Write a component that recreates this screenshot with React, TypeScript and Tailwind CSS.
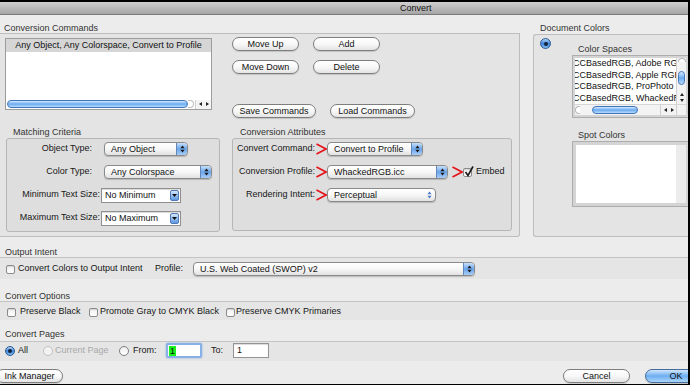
import React from 'react';

const Tri = ({ dir }: { dir: 'l' | 'r' | 'u' | 'd' }) => {
  const wide = dir === 'u' || dir === 'd';
  const d = { l: 'M3 0L3 4L0 2Z', r: 'M0 0L0 4L3 2Z', u: 'M0 3L4 3L2 0Z', d: 'M0 0L4 0L2 3Z' }[dir];
  return (
    <svg width={wide ? 4 : 3} height={wide ? 3 : 4} viewBox={wide ? '0 0 4 3' : '0 0 3 4'}>
      <path d={d} fill="#222" />
    </svg>
  );
};

const Pill = ({ children, className = '' }: { children: React.ReactNode; className?: string }) => (
  <div
    className={`flex h-[14px] shrink-0 items-center justify-center rounded-full border border-[#7e7e7e] bg-linear-to-b from-white via-[#f8f8f8] to-[#e4e4e4] leading-none text-[#111] shadow-[0_1px_1px_rgba(0,0,0,0.15)] ${className}`}
  >
    {children}
  </div>
);

const Popup = ({ value, className = '', light = false }: { value: string; className?: string; light?: boolean }) => (
  <div
    className={`flex h-[14px] shrink-0 items-center overflow-hidden rounded-[4px] border border-[#8a8a8a] bg-linear-to-b from-white via-[#f7f7f7] to-[#e2e2e2] pl-[6px] leading-none text-[#111] shadow-[0_1px_1px_rgba(0,0,0,0.18)] ${className}`}
  >
    <span className="flex-1 truncate">{value}</span>
    <div
      className={`flex h-full w-[11px] items-center justify-center ${
        light ? '' : 'rounded-r-[3px] border-l border-[#6286ba] bg-linear-to-b from-[#c8e0f9] via-[#6aa4ea] to-[#a8cdf5]'
      }`}
    >
      <svg width="5" height="8" viewBox="0 0 5 8">
        <path d="M2.5 0.5L4.6 3.2H0.4Z M0.4 4.8H4.6L2.5 7.5Z" fill={light ? '#4d7cc4' : '#1a1a1a'} />
      </svg>
    </div>
  </div>
);

const Combo = ({ value, className = '' }: { value: string; className?: string }) => (
  <div
    className={`flex h-[15px] w-[80px] shrink-0 items-center border border-[#8f8f8f] bg-white pl-[3px] pr-[1px] leading-none text-[#111] shadow-[inset_0_1px_1px_rgba(0,0,0,0.15)] ${className}`}
  >
    <span className="flex-1">{value}</span>
    <div className="flex h-[11px] w-[9px] items-center justify-center rounded-[2px] border border-[#4f78b5] bg-linear-to-b from-[#d3e6fb] to-[#5b97e0]">
      <svg width="5" height="3" viewBox="0 0 5 3">
        <path d="M0 0H5L2.5 3Z" fill="#111" />
      </svg>
    </div>
  </div>
);

const Box = ({ checked = false }: { checked?: boolean }) => (
  <div className="relative h-[9px] w-[9px] shrink-0 rounded-[2px] border border-[#8b8b8b] bg-linear-to-b from-[#efefef] to-white shadow-[inset_0_1px_1px_rgba(0,0,0,0.12)]">
    {checked && (
      <svg className="absolute -top-[3px] left-0" width="10" height="11" viewBox="0 0 10 11">
        <path d="M1.5 6L4 9.5L9 0.5" fill="none" stroke="#1b1b1b" strokeWidth="1.6" />
      </svg>
    )}
  </div>
);

const Radio = ({ on = false, dim = false, big = false }: { on?: boolean; dim?: boolean; big?: boolean }) => (
  <div
    className={`flex shrink-0 items-center justify-center rounded-full border ${big ? 'h-[11px] w-[11px]' : 'h-[10px] w-[10px]'} ${
      on
        ? 'border-[#2c5a94] bg-linear-to-b from-[#b3d4f5] via-[#3f86d9] to-[#7fbaf0]'
        : dim
        ? 'border-[#c2c2c2] bg-[#f2f2f2]'
        : 'border-[#7d7d7d] bg-linear-to-b from-[#eeeeee] to-white'
    }`}
  >
    {on && <div className="h-[4px] w-[4px] rounded-full bg-[#13233a]" />}
  </div>
);

const RedArrow = ({ className = '' }: { className?: string }) => (
  <svg className={`shrink-0 ${className}`} width="11" height="12" viewBox="0 0 11 12">
    <path d="M0.5 1L10 6L0.5 11" fill="none" stroke="#e4141a" strokeWidth="1.6" />
  </svg>
);

const Thumb = ({ className = '' }: { className?: string }) => (
  <div
    className={`rounded-full border border-[#3f76bb] bg-linear-to-b from-[#d6eafd] via-[#6aaaf0] to-[#b9dbfb] ${className}`}
  />
);

const CommandList = () => (
  <div className="mt-[4px] flex h-[72px] w-[207px] flex-col border border-[#9c9c9c] bg-white">
    <div className="h-[13px] bg-[#d6d6d6] text-center leading-[13px] text-[#111]">
      Any Object, Any Colorspace, Convert to Profile
    </div>
    <div className="flex-1" />
    <div className="flex h-[10px] items-center pl-[1px]">
      <Thumb className="h-[8px] w-[181px]" />
      <div className="h-[8px] w-[6px] rounded-r-full border border-l-0 border-[#bdbdbd] bg-white" />
      <div className="ml-auto flex h-[9px] w-[16px] items-center justify-center gap-[4px] border-l border-[#cfcfcf] bg-[#f4f4f4]">
        <Tri dir="l" />
        <Tri dir="r" />
      </div>
    </div>
  </div>
);

const spaces = ['CCBasedRGB, Adobe RGB (1998)', 'CCBasedRGB, Apple RGB', 'CCBasedRGB, ProPhoto RGB', 'CCBasedRGB, WhackedRGB'];

const ColorSpaces = () => (
  <div className="flex h-[63px] w-[117px] flex-col border border-[#adadad] bg-[#d4d4d4] p-[2px]">
    <div className="flex flex-1 flex-col bg-white">
      <div className="flex flex-1 overflow-hidden">
        <div className="flex-1 overflow-hidden">
          {spaces.map((s) => (
            <div key={s} className="-ml-[2px] h-[11.5px] whitespace-nowrap leading-[11.5px] text-[#111]">
              {s}
            </div>
          ))}
        </div>
        <div className="flex w-[10px] flex-col items-center border-l border-[#d0d0d0] bg-[#f3f3f3]">
          <div className="h-[4px] w-[8px] rounded-t-full border border-b-0 border-[#b8b8b8] bg-white" />
          <Thumb className="mt-[9px] h-[14px] w-[7px]" />
          <div className="mt-auto flex flex-col items-center gap-[3px] pb-[2px]">
            <Tri dir="u" />
            <Tri dir="d" />
          </div>
        </div>
      </div>
      <div className="flex h-[11px] items-center border-t border-[#d6d6d6] bg-[#f3f3f3]">
        <div className="h-[8px] w-[5px] rounded-l-full border border-r-0 border-[#b8b8b8] bg-white" />
        <Thumb className="ml-[12px] h-[8px] w-[46px]" />
        <div className="ml-auto flex h-full w-[16px] items-center justify-center gap-[4px] border-l border-[#cfcfcf]">
          <Tri dir="l" />
          <Tri dir="r" />
        </div>
        <div className="h-full w-[10px] border-l border-[#d0d0d0]" />
      </div>
    </div>
  </div>
);

export default function App() {
  return (
    <div className="relative flex h-[385px] w-[690px] flex-col overflow-hidden border-r-2 border-b border-black bg-[#ececec] font-['Liberation_Sans',Arial,sans-serif] text-[9px] text-[#161616]">
      <div className="h-[15px] shrink-0 border-t-2 border-b border-t-black border-b-[#7a7a7a] bg-linear-to-b from-[#d0d0d0] to-[#a5a5a5] pl-[400px] leading-[12px] text-[#111]">
        Convert
      </div>

      <div className="flex h-[222px] shrink-0">
        <div className="flex w-[520px] shrink-0 flex-col">
          <div className="h-[18px] pl-[4px] pt-[8px] leading-[10px] text-[#333]">Conversion Commands</div>
          <div className="flex flex-1 rounded-br-[3px] border-t border-r border-b border-[#bdbdbd] bg-[#e4e4e4] pl-[5px]">
            <div className="w-[215px] shrink-0">
              <CommandList />
              <div className="mt-[17px] h-[11px] pl-[8px] leading-[11px] text-[#333]">Matching Criteria</div>
              <div className="ml-[1px] flex h-[94px] w-[214px] flex-col gap-[9px] rounded-[3px] border border-[#b6b6b6] bg-[#dedede] pt-[3px]">
                <div className="flex h-[14px] items-center">
                  <span className="w-[85px] text-right">Object Type:</span>
                  <Popup value="Any Object" className="ml-[12px] w-[84px]" />
                </div>
                <div className="flex h-[14px] items-center">
                  <span className="w-[85px] text-right">Color Type:</span>
                  <Popup value="Any Colorspace" className="ml-[12px] w-[108px]" />
                </div>
                <div className="flex h-[14px] items-center">
                  <span className="w-[93px] text-right">Minimum Text Size:</span>
                  <Combo value="No Minimum" className="ml-[1px]" />
                </div>
                <div className="flex h-[14px] items-center">
                  <span className="w-[93px] text-right">Maximum Text Size:</span>
                  <Combo value="No Maximum" className="ml-[1px]" />
                </div>
              </div>
            </div>

            <div className="ml-[12px] w-[280px] shrink-0">
              <div className="mt-[3px] flex gap-[14px]">
                <Pill className="w-[67px]">Move Up</Pill>
                <Pill className="w-[67px]">Add</Pill>
              </div>
              <div className="mt-[9px] flex gap-[14px]">
                <Pill className="w-[67px]">Move Down</Pill>
                <Pill className="w-[67px]">Delete</Pill>
              </div>
              <div className="mt-[30px] flex gap-[14px]">
                <Pill className="w-[84px]">Save Commands</Pill>
                <Pill className="w-[85px]">Load Commands</Pill>
              </div>
              <div className="mt-[9px] h-[11px] pl-[8px] leading-[11px] text-[#333]">Conversion Attributes</div>
              <div className="flex h-[93px] w-[280px] flex-col gap-[9px] rounded-[3px] border border-[#b6b6b6] bg-[#dedede] pt-[3px]">
                <div className="flex h-[14px] items-center">
                  <span className="w-[82px] text-right">Convert Command:</span>
                  <RedArrow className="ml-[1px]" />
                  <Popup value="Convert to Profile" className="w-[96px]" />
                </div>
                <div className="flex h-[14px] items-center">
                  <span className="w-[82px] text-right">Conversion Profile:</span>
                  <RedArrow className="ml-[1px]" />
                  <Popup value="WhackedRGB.icc" className="w-[121px]" />
                  <RedArrow className="ml-[4px]" />
                  <Box checked />
                  <span className="ml-[4px]">Embed</span>
                </div>
                <div className="flex h-[14px] items-center">
                  <span className="w-[82px] text-right">Rendering Intent:</span>
                  <RedArrow className="ml-[1px]" />
                  <Popup value="Perceptual" className="w-[109px]" light />
                </div>
              </div>
            </div>
          </div>
        </div>

        <div className="ml-[13px] flex w-[170px] shrink-0 flex-col">
          <div className="h-[19px] pl-[7px] pt-[8px] leading-[10px] text-[#333]">Document Colors</div>
          <div className="flex flex-1 rounded-l-[3px] border border-r-0 border-[#bdbdbd] bg-[#e4e4e4]">
            <div className="w-[38px] shrink-0 pl-[6px] pt-[3px]">
              <Radio on big />
            </div>
            <div className="flex-1 pt-[9px]">
              <div className="h-[11px] pl-[6px] leading-[11px] text-[#333]">Color Spaces</div>
              <ColorSpaces />
              <div className="mt-[12px] h-[11px] pl-[6px] leading-[11px] text-[#333]">Spot Colors</div>
              <div className="flex h-[66px] w-[118px] border border-[#adadad] bg-[#d4d4d4] p-[3px]">
                <div className="flex-1 bg-white" />
                <div className="w-[10px] bg-[#ececec]" />
              </div>
            </div>
          </div>
        </div>
      </div>

      <div className="h-[20px] shrink-0 pl-[5px] pt-[11px] leading-[9px] text-[#333]">Output Intent</div>
      <div className="h-[22px] shrink-0 border-t border-[#c4c4c4] bg-[#e5e5e5] pt-[4px]">
        <div className="flex h-[14px] items-center pl-[6px]">
          <Box />
          <span className="ml-[3px] w-[137px]">Convert Colors to Output Intent</span>
          <span className="w-[38px]">Profile:</span>
          <Popup value="U.S. Web Coated (SWOP) v2" className="w-[282px]" />
        </div>
      </div>

      <div className="h-[22px] shrink-0 pl-[5px] pt-[13px] leading-[9px] text-[#333]">Convert Options</div>
      <div className="h-[19px] shrink-0 border-t border-[#c4c4c4] bg-[#e5e5e5] pt-[3px]">
        <div className="flex h-[14px] items-center pl-[7px]">
          <Box />
          <span className="ml-[4px] w-[69px]">Preserve Black</span>
          <Box />
          <span className="ml-[2px] w-[126px]">Promote Gray to CMYK Black</span>
          <Box />
          <span className="ml-[1px]">Preserve CMYK Primaries</span>
        </div>
      </div>

      <div className="h-[21px] shrink-0 pl-[5px] pt-[10px] leading-[9px] text-[#333]">Convert Pages</div>
      <div className="h-[20px] shrink-0 border-t border-[#c4c4c4] bg-[#e5e5e5] pt-[1px]">
        <div className="flex h-[15px] items-center pl-[5px]">
          <Radio on />
          <span className="ml-[3px] w-[25px]">All</span>
          <Radio dim />
          <span className="ml-[2px] w-[64px] text-[#a9a9a9]">Current Page</span>
          <Radio />
          <span className="ml-[4px] w-[33px]">From:</span>
          <div className="flex h-[15px] w-[36px] items-center rounded-[2px] border-2 border-[#86b0e6] bg-white pl-[1px] shadow-[0_0_2px_#7fa8e0]">
            <span className="bg-[#19f01c] px-[1px] leading-[10px] text-[#111]">1</span>
          </div>
          <span className="ml-[9px] w-[22px]">To:</span>
          <div className="flex h-[15px] w-[36px] items-center border border-[#939393] bg-white pl-[3px] shadow-[inset_0_1px_1px_rgba(0,0,0,0.15)]">
            1
          </div>
        </div>
      </div>

      <div className="flex flex-1 items-start pt-[8px]">
        <Pill className="-ml-[4px] w-[67px]">Ink Manager</Pill>
        <Pill className="ml-auto w-[67px]">Cancel</Pill>
        <div className="ml-[15px] -mr-[19px] flex h-[14px] w-[62px] shrink-0 items-center justify-center rounded-full border border-[#466c9c] bg-linear-to-b from-[#d0e6fc] via-[#6cadf0] to-[#acd6fb] leading-none text-[#111] shadow-[0_1px_1px_rgba(0,0,0,0.2)]">
          OK
        </div>
      </div>
    </div>
  );
}
